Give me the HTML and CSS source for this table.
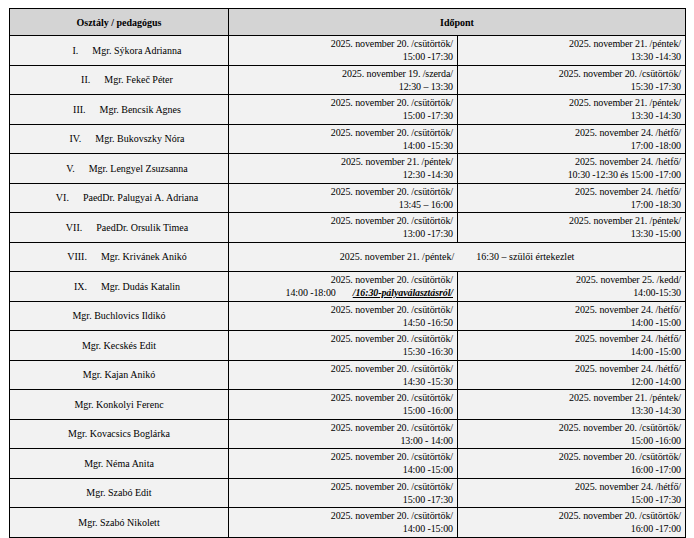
FILE: index.html
```html
<!DOCTYPE html>
<html lang="hu">
<head>
<meta charset="utf-8">
<title>Fogadóórák</title>
<link rel="stylesheet" href="styles.css">
</head>
<body>
<table class="sched">
  <colgroup><col class="c1"><col class="c2"><col class="c3"></colgroup>
  <thead>
    <tr><th>Osztály / pedagógus</th><th colspan="2">Időpont</th></tr>
  </thead>
  <tbody>
    <tr><td class="who num"><span class="rn">I.</span>Mgr. Sýkora Adrianna</td><td class="t">2025. november 20. /csütörtök/<br>15:00 -17:30</td><td class="t">2025. november 21. /péntek/<br>13:30 -14:30</td></tr>
    <tr><td class="who num"><span class="rn">II.</span>Mgr. Fekeč Péter</td><td class="t">2025. november 19. /szerda/<br>12:30 – 13:30</td><td class="t">2025. november 20. /csütörtök/<br>15:30 -17:30</td></tr>
    <tr><td class="who num"><span class="rn">III.</span>Mgr. Bencsik Agnes</td><td class="t">2025. november 20. /csütörtök/<br>15:00 -17:30</td><td class="t">2025. november 21. /péntek/<br>13:30 -14:30</td></tr>
    <tr><td class="who num"><span class="rn">IV.</span>Mgr. Bukovszky Nóra</td><td class="t">2025. november 20. /csütörtök/<br>14:00 -15:30</td><td class="t">2025. november 24. /hétfő/<br>17:00 -18:00</td></tr>
    <tr><td class="who num"><span class="rn">V.</span>Mgr. Lengyel Zsuzsanna</td><td class="t">2025. november 21. /péntek/<br>12:30 -14:30</td><td class="t">2025. november 24. /hétfő/<br>10:30 -12:30 és 15:00 -17:00</td></tr>
    <tr><td class="who num"><span class="rn">VI.</span>PaedDr. Palugyai A. Adriana</td><td class="t">2025. november 20. /csütörtök/<br>13:45 – 16:00</td><td class="t">2025. november 24. /hétfő/<br>17:00 -18:30</td></tr>
    <tr><td class="who num"><span class="rn">VII.</span>PaedDr. Orsulik Timea</td><td class="t">2025. november 20. /csütörtök/<br>13:00 -17:30</td><td class="t">2025. november 21. /péntek/<br>13:30 -15:00</td></tr>
    <tr><td class="who num"><span class="rn">VIII.</span>Mgr. Krivánek Anikó</td><td class="span" colspan="2"><span class="gap">2025. november 21. /péntek/</span>16:30 – szülői értekezlet</td></tr>
    <tr><td class="who num"><span class="rn">IX.</span>Mgr. Dudás Katalin</td><td class="t">2025. november 20. /csütörtök/<br><span class="gap gap-sm">14:00 -18:00</span><span class="note">/16:30-pályaválasztásról/</span></td><td class="t">2025. november 25. /kedd/<br>14:00-15:30</td></tr>
    <tr><td class="who">Mgr. Buchlovics Ildikó</td><td class="t">2025. november 20. /csütörtök/<br>14:50 -16:50</td><td class="t">2025. november 24. /hétfő/<br>14:00 -15:00</td></tr>
    <tr><td class="who">Mgr. Kecskés Edit</td><td class="t">2025. november 20. /csütörtök/<br>15:30 -16:30</td><td class="t">2025. november 24. /hétfő/<br>14:00 -15:00</td></tr>
    <tr><td class="who">Mgr. Kajan Anikó</td><td class="t">2025. november 20. /csütörtök/<br>14:30 -15:30</td><td class="t">2025. november 24. /hétfő/<br>12:00 -14:00</td></tr>
    <tr><td class="who">Mgr. Konkolyi Ferenc</td><td class="t">2025. november 20. /csütörtök/<br>15:00 -16:00</td><td class="t">2025. november 21. /péntek/<br>13:30 -14:30</td></tr>
    <tr><td class="who">Mgr. Kovacsics Boglárka</td><td class="t">2025. november 20. /csütörtök/<br>13:00 - 14:00</td><td class="t">2025. november 20. /csütörtök/<br>15:00 -16:00</td></tr>
    <tr><td class="who">Mgr. Néma Anita</td><td class="t">2025. november 20. /csütörtök/<br>14:00 -15:00</td><td class="t">2025. november 20. /csütörtök/<br>16:00 -17:00</td></tr>
    <tr><td class="who">Mgr. Szabó Edit</td><td class="t">2025. november 20. /csütörtök/<br>15:00 -17:30</td><td class="t">2025. november 24. /hétfő/<br>15:00 -17:30</td></tr>
    <tr><td class="who">Mgr. Szabó Nikolett</td><td class="t">2025. november 20. /csütörtök/<br>14:00 -15:00</td><td class="t">2025. november 20. /csütörtök/<br>16:00 -17:00</td></tr>
  </tbody>
</table>
</body>
</html>
```
FILE: styles.css
```css
html, body {
  margin: 0;
  background: #ffffff;
}
body {
  padding: 8px 0 0 9px;
  font-family: "Liberation Serif", "Times New Roman", serif;
  font-size: 10px;
  color: #000;
}
.sched {
  border-collapse: collapse;
  table-layout: fixed;
  width: 676px;
}
.c1 { width: 219px; }
.c2 { width: 229px; }
.c3 { width: 228px; }
.sched th, .sched td {
  border: 1px solid #000;
  padding: 0 4px 0 4px;
  line-height: 13px;
  vertical-align: middle;
}
.sched th {
  background: #d4d4d4;
  height: 26px;
  font-weight: bold;
  text-align: center;
}
.sched td {
  background: #f2f2f2;
  height: 28.5px;
}
.who {
  text-align: center;
  white-space: nowrap;
}
.num { padding-left: 20px !important; }
.rn { margin-right: 14px; }
.t { text-align: right; white-space: nowrap; letter-spacing: -0.1px; }
.span { text-align: center; white-space: nowrap; }
.gap { margin-right: 22px; }
.gap-sm { margin-right: 17px; }
.note {
  font-weight: bold;
  font-style: italic;
  text-decoration: underline;
}
```
